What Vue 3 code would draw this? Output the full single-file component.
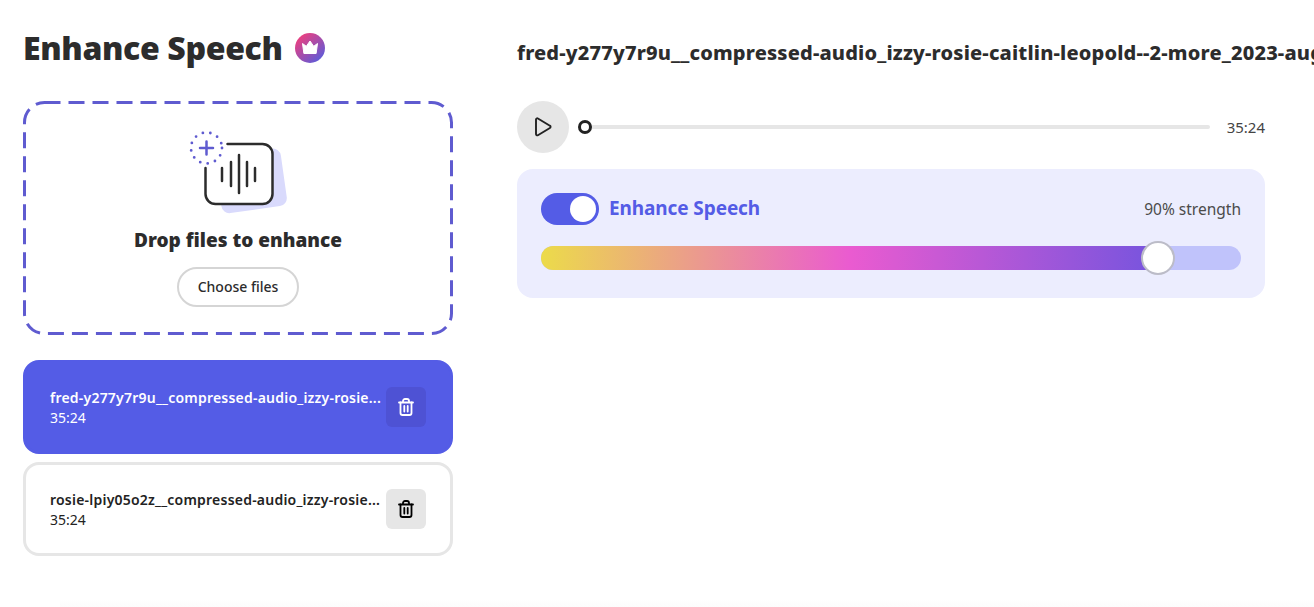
<script setup>
const files = [
  { name: 'fred-y277y7r9u__compressed-audio_izzy-rosie...', time: '35:24', active: true },
  { name: 'rosie-lpiy05o2z__compressed-audio_izzy-rosie...', time: '35:24', active: false },
]
const bars = [
  { x: 222, y1: 168, y2: 181 },
  { x: 231, y1: 162, y2: 186 },
  { x: 239, y1: 155, y2: 193 },
  { x: 247, y1: 162, y2: 186 },
  { x: 255, y1: 168, y2: 181 },
]
</script>

<template>
  <div class="page">
    <div class="left">
      <div class="heading">
        <h1>Enhance Speech</h1>
        <svg class="crown" width="30" height="30" viewBox="0 0 30 30">
          <defs>
            <linearGradient id="crownGrad" x1="0.15" y1="0.1" x2="0.85" y2="0.9">
              <stop offset="0" stop-color="#ec3f7f" />
              <stop offset="1" stop-color="#5f5bd8" />
            </linearGradient>
          </defs>
          <circle cx="15" cy="15" r="15" fill="url(#crownGrad)" />
          <path d="M7.500 10.500l3.800 2.800L15 8l3.700 5.300 3.800-2.800-1.400 10H8.900z" fill="#fff" stroke="#fff" stroke-width="1" stroke-linejoin="round" />
        </svg>
      </div>

      <div class="drop">
        <svg class="dash" viewBox="0 0 430 234">
          <rect x="1.500" y="1.500" width="427" height="231" rx="20" fill="none" stroke="#5f5bd0" stroke-width="3" stroke-dasharray="16 8" />
        </svg>
        <svg class="drop-icon" width="110" height="95" viewBox="183 125 110 95">
          <rect x="218" y="152" width="66" height="58" rx="8" fill="#d9dafc" transform="rotate(-8 250 180)" />
          <path d="M205.500 168v26a10 10 0 0 0 10 10h47a10 10 0 0 0 10-10v-40a10 10 0 0 0-10-10h-35" fill="#fff" stroke="none" />
          <path d="M205.500 168v26a10 10 0 0 0 10 10h47a10 10 0 0 0 10-10v-40a10 10 0 0 0-10-10h-35" fill="none" stroke="#2c2c2c" stroke-width="2.500" stroke-linecap="round" />
          <line v-for="b in bars" :key="b.x" :x1="b.x" :y1="b.y1" :x2="b.x" :y2="b.y2" stroke="#2c2c2c" stroke-width="2.500" stroke-linecap="round" />
          <circle cx="206.500" cy="148" r="15.500" fill="none" stroke="#5f5bd0" stroke-width="2.800" stroke-linecap="round" stroke-dasharray="0 7.650" />
          <path d="M200 148h13M206.500 141.500v13" stroke="#5f5bd0" stroke-width="2.500" stroke-linecap="round" />
        </svg>
        <div class="drop-title">Drop files to enhance</div>
        <button class="choose">Choose files</button>
      </div>

      <div class="list">
        <div v-for="f in files" :key="f.name" class="item" :class="{ active: f.active }">
          <div class="item-text">
            <div class="item-name">{{ f.name }}</div>
            <div class="item-time">{{ f.time }}</div>
          </div>
          <button class="del">
            <svg width="20" height="20" viewBox="0 0 20 20" fill="none" stroke="currentColor" stroke-width="1.800" stroke-linecap="round" stroke-linejoin="round">
              <path d="M3 5.500h14M7 5.500V4a2 2 0 0 1 2-2h2a2 2 0 0 1 2 2v1.500" />
              <path d="M4.500 5.500v10.500a2 2 0 0 0 2 2h7a2 2 0 0 0 2-2V5.500" />
              <path d="M8.300 9v5.500M11.700 9v5.500" />
            </svg>
          </button>
        </div>
      </div>
    </div>

    <div class="right">
      <div class="file-title">fred-y277y7r9u__compressed-audio_izzy-rosie-caitlin-leopold--2-more_2023-aug</div>

      <div class="player">
        <button class="play">
          <svg width="22" height="22" viewBox="0 0 22 22">
            <path d="M4 3.600c0-1 1-1.600 1.900-1.100l12 7.200c.9.500.9 1.800 0 2.300l-12 7.200c-.9.500-1.900-.1-1.900-1.100z" fill="none" stroke="#222" stroke-width="1.900" stroke-linejoin="round" />
          </svg>
        </button>
        <div class="track"><span class="track-thumb"></span></div>
        <span class="total">35:24</span>
      </div>

      <div class="panel">
        <div class="panel-top">
          <span class="toggle"><span class="knob"></span></span>
          <span class="panel-label">Enhance Speech</span>
          <span class="strength">90% strength</span>
        </div>
        <div class="slider">
          <div class="slider-fill"></div>
          <span class="slider-thumb"></span>
        </div>
      </div>
    </div>
    <div class="bottom-fade"></div>
  </div>
</template>

<style>
html, body {
  overflow: hidden;
  background: #fff;
}
</style>

<style scoped>
.page {
  position: relative;
  display: grid;
  grid-template-columns: 430px 748px;
  column-gap: 64px;
  padding-left: 23px;
  width: 1314px;
  height: 607px;
  box-sizing: border-box;
  overflow: hidden;
  font-family: "Noto Sans", "Open Sans", sans-serif;
  color: #2c2c2c;
}

.heading {
  display: flex;
  align-items: center;
  gap: 12px;
  height: 101px;
  padding-bottom: 6px;
  box-sizing: border-box;
}

h1 {
  margin: 0;
  font-size: 32px;
  font-weight: 900;
  letter-spacing: -0.35px;
}

.crown {
  flex: none;
}

.drop {
  position: relative;
  height: 234px;
  display: flex;
  flex-direction: column;
  align-items: center;
  padding-top: 24px;
  box-sizing: border-box;
}

.dash {
  position: absolute;
  inset: 0;
  width: 100%;
  height: 100%;
}

.drop-icon {
  flex: none;
}

.drop-title {
  font-size: 19px;
  font-weight: 900;
  line-height: 28px;
  margin-top: 6px;
}

.choose {
  margin-top: 13px;
  width: 122px;
  height: 40px;
  padding: 0 0 2px;
  border: 2px solid #d5d5d5;
  border-radius: 20px;
  background: #fff;
  font: 500 14px "Noto Sans", sans-serif;
  color: #2c2c2c;
}

.list {
  margin-top: 25px;
  display: flex;
  flex-direction: column;
  gap: 8px;
}

.item {
  display: flex;
  align-items: center;
  justify-content: space-between;
  height: 94px;
  padding: 0 24px;
  box-sizing: border-box;
  border: 3px solid #e6e6e6;
  border-radius: 16px;
  color: #222;
}

.item.active {
  background: #545ce6;
  border-color: #545ce6;
  color: #fff;
}

.item-text {
  font-size: 14px;
  line-height: 20px;
  margin-bottom: -2px;
  white-space: nowrap;
}

.item-name {
  font-weight: 600;
  letter-spacing: 0.22px;
}

.del {
  flex: none;
  width: 40px;
  height: 40px;
  display: flex;
  align-items: center;
  justify-content: center;
  border: none;
  border-radius: 6px;
  background: #e6e6e6;
  color: #000;
  padding: 0;
}

.active .del {
  background: #4e52d4;
  color: #fff;
}

.file-title {
  width: 900px;
  height: 101px;
  padding-top: 39px;
  box-sizing: border-box;
  font-size: 20px;
  font-weight: 800;
  letter-spacing: 0.17px;
  line-height: 28px;
  white-space: nowrap;
}

.player {
  display: flex;
  align-items: center;
  height: 52px;
}

.play {
  flex: none;
  width: 52px;
  height: 52px;
  display: flex;
  align-items: center;
  justify-content: center;
  border: none;
  border-radius: 50%;
  background: #e6e6e6;
  padding: 0;
}

.track {
  position: relative;
  flex: 1;
  height: 4px;
  margin: 0 16px;
  border-radius: 2px;
  background: #e6e6e6;
}

.track-thumb {
  position: absolute;
  left: -7px;
  top: -5px;
  width: 14px;
  height: 14px;
  box-sizing: border-box;
  border: 3px solid #222;
  border-radius: 50%;
  background: #fff;
}

.total {
  width: 39px;
  text-align: right;
  font-size: 15px;
  color: #444;
}

.panel {
  margin-top: 16px;
  height: 129px;
  padding: 24px;
  box-sizing: border-box;
  border-radius: 16px;
  background: #ecedfe;
}

.panel-top {
  display: flex;
  align-items: center;
  height: 32px;
}

.toggle {
  display: flex;
  justify-content: flex-end;
  align-items: center;
  width: 58px;
  height: 32px;
  padding: 0 3px;
  box-sizing: border-box;
  border-radius: 16px;
  background: #545ce6;
}

.knob {
  width: 26px;
  height: 26px;
  border-radius: 50%;
  background: #fff;
}

.panel-label {
  margin-left: 10px;
  margin-bottom: 2px;
  font-size: 19px;
  font-weight: 700;
  letter-spacing: -0.1px;
  color: #545ce6;
}

.strength {
  margin-left: auto;
  font-size: 15.500px;
  color: #4b4b4b;
}

.slider {
  position: relative;
  margin-top: 21px;
  height: 24px;
  border-radius: 12px;
  background: #c0c3fb;
}

.slider-fill {
  width: 617px;
  height: 24px;
  border-radius: 12px 0 0 12px;
  background: linear-gradient(90deg, #ecdb4a 0%, #ea5bd0 50%, #7654de 100%);
}

.slider-thumb {
  position: absolute;
  left: 600px;
  top: -5px;
  width: 34px;
  height: 34px;
  box-sizing: border-box;
  border: 2px solid #bcbcc8;
  border-radius: 50%;
  background: #fff;
}

.bottom-fade {
  position: absolute;
  left: 60px;
  right: 0;
  bottom: 0;
  height: 8px;
  background: linear-gradient(#ffffff, #fcfcfc);
}
</style>
